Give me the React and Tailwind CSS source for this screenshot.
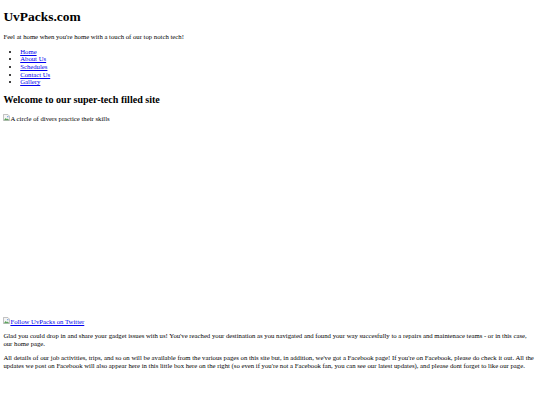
const links = ['Home', 'About Us', 'Schedules', 'Contact Us', 'Gallery']

function BrokenImage() {
  return (
    <svg width="7" height="7" viewBox="0 0 16 16" className="inline-block align-baseline">
      <path d="M1 1h10l4 4v10H1z" fill="#f4f4f4" stroke="#a0a0a0" strokeWidth="1.5" />
      <path d="M2 14l4-5 3 3 2-2 3 4z" fill="#5aa25a" />
      <circle cx="11" cy="6" r="1.6" fill="#5b8fd6" />
    </svg>
  )
}

export default function App() {
  return (
    <div className="bg-white text-black text-[6.72px] leading-[7.6px] font-['Liberation_Serif',serif] px-[3.4px] pt-[9px] pb-[3.4px] min-h-[405px]">
      <h1 className="text-[13.44px] leading-[15.4px] font-bold mb-[9px]">UvPacks.com</h1>
      <p className="mb-[6.72px]">Feel at home when you&apos;re home with a touch of our top notch tech!</p>
      <ul className="list-disc pl-[16.8px] mb-[8.4px]">
        {links.map((l) => (
          <li key={l}>
            <a href="#" className="text-[#0000ee] underline">{l}</a>
          </li>
        ))}
      </ul>
      <h2 className="text-[10.08px] leading-[11.6px] font-bold mb-[8.4px]">Welcome to our super-tech filled site</h2>
      <p className="mb-[6.72px]">
        <span className="inline-block h-[196px] align-bottom">
          <BrokenImage />A circle of divers practice their skills
        </span>
      </p>
      <p className="mb-[6.72px]">
        <a href="#" className="text-[#0000ee] underline">
          <BrokenImage />Follow UvPacks on Twitter
        </a>
      </p>
      <p className="mb-[6.72px]">
        Glad you could drop in and share your gadget issues with us! You&apos;ve reached your destination as you navigated and found your way succesfully to a repairs and maintenace teams - or in this case, our home page.
      </p>
      <p>
        All details of our job activities, trips, and so on will be available from the various pages on this site but, in addition, we&apos;ve got a Facebook page! If you&apos;re on Facebook, please do check it out. All the updates we post on Facebook will also appear here in this little box here on the right (so even if you&apos;re not a Facebook fan, you can see our latest updates), and please dont forget to like our page.
      </p>
    </div>
  )
}
